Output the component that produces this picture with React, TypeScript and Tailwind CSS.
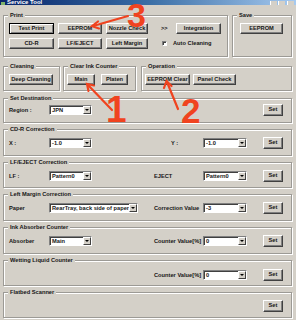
import React from "react";

const btnBase =
  "flex items-center justify-center h-[11px] bg-[#d4d0c8] leading-none whitespace-nowrap";
const raised =
  "border border-t-white border-l-white border-r-[#404040] border-b-[#404040] shadow-[inset_-1px_-1px_0_#808080]";

const Btn = ({ children, className = "", isDefault = false }: { children: React.ReactNode; className?: string; isDefault?: boolean }) => (
  <div
    className={`${btnBase} ${
      isDefault ? "border border-black shadow-[inset_1px_1px_0_#fff,inset_-1px_-1px_0_#808080]" : raised
    } ${className}`}
  >
    {children}
  </div>
);

const Group = ({ title, className = "", children }: { title: string; className?: string; children?: React.ReactNode }) => (
  <div className={`flex flex-col border border-[#9c9a95] shadow-[inset_1px_1px_0_#fff,1px_1px_0_#fff] ${className}`}>
    <span className="-mt-[5px] ml-[4px] self-start bg-[#d4d0c8] px-[2px] h-[8px] leading-[8px]">{title}</span>
    {children}
  </div>
);

const Combo = ({ value, className = "" }: { value: string; className?: string }) => (
  <div
    className={`flex h-[10px] bg-white border border-t-[#808080] border-l-[#808080] border-b-white border-r-white shadow-[inset_1px_1px_0_#404040] ${className}`}
  >
    <span className="flex-1 pl-[2px] pt-[1px] leading-[7px] overflow-hidden whitespace-nowrap">{value}</span>
    <span className="w-[8px] h-[8px] mt-[0px] bg-[#d4d0c8] border border-t-white border-l-white border-r-[#404040] border-b-[#404040] flex items-center justify-center">
      <svg width="4" height="2" viewBox="0 0 4 2">
        <path d="M0 0h4L2 2z" fill="#000" />
      </svg>
    </span>
  </div>
);

const SetBtn = () => <Btn className="w-[20px] h-[12px] ml-[16px]">Set</Btn>;

const RightPart = ({ label, value, labelClass = "" }: { label?: string; value?: string; labelClass?: string }) => (
  <div className="ml-auto mr-[8px] flex items-center">
    {label !== undefined && (
      <>
        <span className={`w-[49px] whitespace-nowrap ${labelClass}`}>{label}</span>
        <Combo value={value || ""} className="w-[44px]" />
      </>
    )}
    <SetBtn />
  </div>
);

export default function App() {
  return (
    <div className="relative w-[296px] h-[320px] overflow-hidden bg-[#d4d0c8] font-['Liberation_Sans',Arial,sans-serif] text-[5.7px] font-bold text-[#161616]">
      {/* title bar */}
      <div className="h-[5px] overflow-hidden bg-linear-to-r from-[#0a246a] via-[#3a6ea5] to-[#a6caf0] flex items-end">
        <span className="ml-[1px] w-[4px] h-[3px] bg-[#7fb36a]" />
        <span className="ml-[2px] text-white text-[6px] leading-[8px] -mb-[1px]">Service Tool</span>
        <div className="ml-auto mr-[2px] flex gap-[1px] items-end">
          <span className="w-[7px] h-[4px] bg-[#d4d0c8] border-l border-white" />
          <span className="w-[7px] h-[4px] bg-[#d4d0c8] border-l border-white" />
          <span className="ml-[1px] w-[7px] h-[4px] bg-[#d4d0c8] border-l border-white" />
        </div>
      </div>

      <div className="pl-[3px] pr-[4px] flex flex-col">
        {/* Print / Save */}
        <div className="flex gap-[4px] mt-[10px]">
          <Group title="Print" className="w-[225px] h-[42px]">
            <div className="flex items-center mt-[4px] pl-[5px] gap-[4px]">
              <Btn isDefault className="w-[45px]">Test Print</Btn>
              <Btn className="w-[44px]">EEPROM</Btn>
              <Btn className="w-[42px]">Nozzle Check</Btn>
              <span className="ml-[9px] w-[10px]">&gt;&gt;</span>
              <Btn className="ml-[1px] w-[45px]">Integration</Btn>
            </div>
            <div className="flex items-center mt-[4px] pl-[5px] gap-[4px]">
              <Btn className="w-[45px]">CD-R</Btn>
              <Btn className="w-[44px]">LF/EJECT</Btn>
              <Btn className="w-[42px]">Left Margin</Btn>
              <span className="ml-[10px] w-[5px] h-[5px] bg-white border border-t-[#808080] border-l-[#808080] border-b-white border-r-white shadow-[inset_1px_1px_0_#404040]" />
              <span className="ml-[2px]">Auto Cleaning</span>
            </div>
          </Group>
          <Group title="Save" className="flex-1 h-[42px]">
            <div className="flex mt-[4px] pl-[7px]">
              <Btn className="w-[43px]">EEPROM</Btn>
            </div>
          </Group>
        </div>

        {/* Cleaning / Clear Ink Counter / Operation */}
        <div className="flex mt-[9px]">
          <Group title="Cleaning" className="w-[57px] h-[25px]">
            <div className="flex mt-[4px] pl-[5px]">
              <Btn className="w-[44px]">Deep Cleaning</Btn>
            </div>
          </Group>
          <Group title="Clear Ink Counter" className="ml-[3px] w-[73px] h-[25px]">
            <div className="flex mt-[4px] pl-[3px] gap-[6px]">
              <Btn className="w-[28px]">Main</Btn>
              <Btn className="w-[27px]">Platen</Btn>
            </div>
          </Group>
          <Group title="Operation" className="ml-[5px] flex-1 h-[25px]">
            <div className="flex mt-[4px] pl-[3px] gap-[3px]">
              <Btn className="w-[45px]">EEPROM Clear</Btn>
              <Btn className="w-[43px]">Panel Check</Btn>
            </div>
          </Group>
        </div>

        <Group title="Set Destination" className="mt-[7px] h-[25px]">
          <div className="flex items-center h-[12px] mt-[2px]">
            <span className="w-[45px] pl-[5px]">Region :</span>
            <Combo value="JPN" className="w-[43px]" />
            <RightPart />
          </div>
        </Group>

        <Group title="CD-R Correction" className="mt-[6px] h-[27px]">
          <div className="flex items-center h-[12px] mt-[4px]">
            <span className="w-[45px] pl-[5px]">X :</span>
            <Combo value="-1.0" className="w-[43px]" />
            <RightPart label="Y :" value="-1.0" labelClass="pl-[17px]" />
          </div>
        </Group>

        <Group title="LF/EJECT Correction" className="mt-[6px] h-[26px]">
          <div className="flex items-center h-[12px] mt-[4px]">
            <span className="w-[45px] pl-[5px]">LF :</span>
            <Combo value="Pattern0" className="w-[43px]" />
            <RightPart label="EJECT" value="Pattern0" />
          </div>
        </Group>

        <Group title="Left Margin Correction" className="mt-[6px] h-[27px]">
          <div className="flex items-center h-[12px] mt-[4px]">
            <span className="w-[45px] pl-[5px]">Paper</span>
            <Combo value="RearTray, back side of paper" className="w-[89px]" />
            <RightPart label="Correction Value" value="-3" />
          </div>
        </Group>

        <Group title="Ink Absorber Counter" className="mt-[6px] h-[27px]">
          <div className="flex items-center h-[12px] mt-[4px]">
            <span className="w-[45px] pl-[5px]">Absorber</span>
            <Combo value="Main" className="w-[43px]" />
            <RightPart label="Counter Value[%]" value="0" />
          </div>
        </Group>

        <Group title="Wetting Liquid Counter" className="mt-[6px] h-[26px]">
          <div className="flex items-center h-[12px] mt-[5px]">
            <RightPart label="Counter Value[%]" value="0" />
          </div>
        </Group>

        <Group title="Flatbed Scanner" className="mt-[6px] h-[26px]">
          <div className="flex items-center h-[12px] mt-[4px]">
            <RightPart />
          </div>
        </Group>
      </div>

      {/* annotations */}
      <svg className="absolute inset-0 pointer-events-none" width="296" height="320" viewBox="0 0 296 320">
        <g stroke="#f0431f" strokeWidth="2.2" strokeLinecap="round" fill="none">
          <line x1="128" y1="16" x2="93" y2="26" />
          <polyline points="98,21.5 92,26.2 99,28.5" />
          <line x1="112" y1="110" x2="88" y2="85" />
          <polyline points="88.5,91 87,84 94,85.5" />
          <line x1="178" y1="109" x2="167" y2="82" />
          <polyline points="164,88 166.5,81 171.5,86" />
        </g>
        <g fill="#f0431f" fontFamily="'Liberation Sans', Arial, sans-serif" fontWeight="bold">
          <text x="127" y="27" fontSize="34">3</text>
          <text x="106" y="122" fontSize="37">1</text>
          <text x="181" y="123" fontSize="35">2</text>
        </g>
      </svg>
    </div>
  );
}
